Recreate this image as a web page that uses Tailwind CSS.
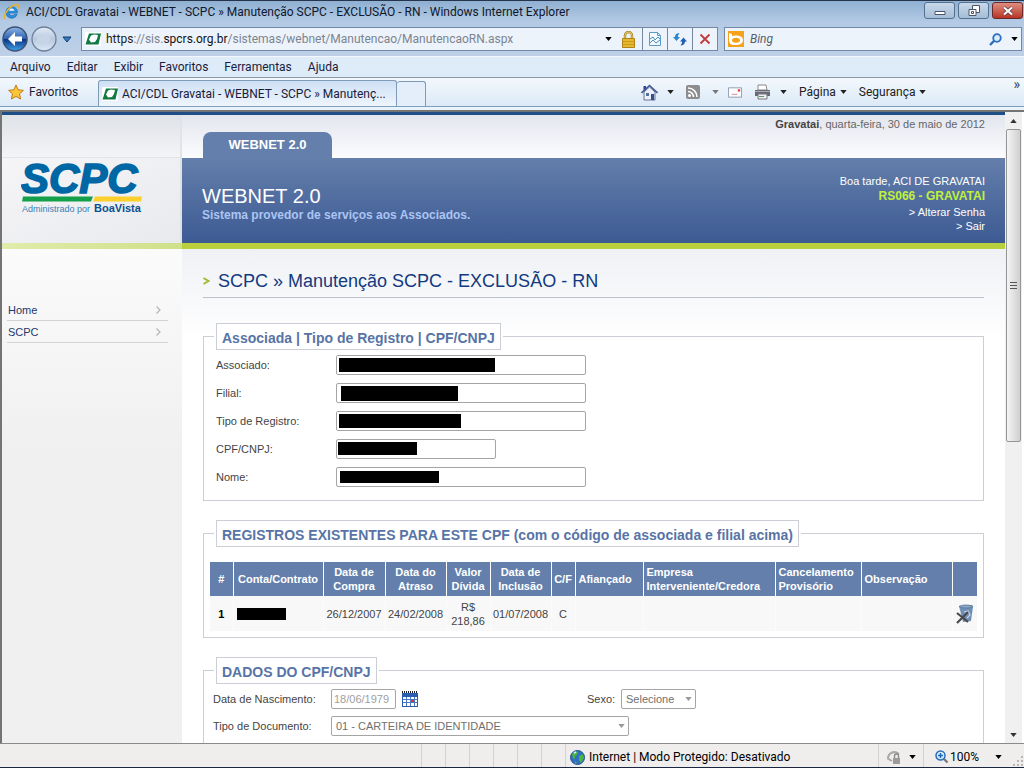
<!DOCTYPE html>
<html lang="pt-BR">
<head>
<meta charset="utf-8">
<title>ACI/CDL Gravatai - WEBNET - SCPC</title>
<script src="https://cdn.jsdelivr.net/npm/@tailwindcss/browser@4"></script>
</head>
<body class="h-screen overflow-hidden flex flex-col bg-[#b9cde6] font-[Roboto,sans-serif] text-[12px] leading-4 text-[#1b1b3a]">
<svg class="hidden">
  <defs>
    <symbol id="fav" viewBox="0 0 16 14"><path d="M0 0h16v14H0z" fill="#fff"/><path d="M4 1.500h12l-2.500 11H.500z" fill="#107a42"/><path d="M6 3.500l3-1 4 .500-1 4-2 3-4 .500-2-3z" fill="#fff"/></symbol>
    <symbol id="down" viewBox="0 0 8 5"><path d="M0 0h8L4 5z" fill="currentColor"/></symbol>
  </defs>
</svg>

<header class="shrink-0 border-t border-[#26344c]">
  <div class="h-[21px] flex items-center pl-[3px] bg-linear-to-b from-[#8fb0d2] to-[#b4cae4] whitespace-nowrap">
    <svg class="size-[17px] shrink-0" viewBox="0 0 16 16"><path d="M13.500 9.500H5.500a3 3 0 0 0 5.300 1.300h2.500A5.500 5.500 0 1 1 13.600 8z" fill="#2a8fd8" stroke="#1767ad" stroke-width=".6"/><path d="M5.600 7.200h5.200a2.700 2.700 0 0 0-5.200 0z" fill="#e9f4fc"/><path d="M2 15C-1 12 6 3 12 1.500c3-.7 3 1.500 2 3.500" fill="none" stroke="#eab331" stroke-width="1.400"/></svg>
    <h1 class="ml-[6px] text-[#10182c]">ACI/CDL Gravatai - WEBNET - SCPC » Manutenção SCPC - EXCLUSÃO - RN - Windows Internet Explorer</h1>
    <div class="ml-auto mr-[1px] flex gap-[3px] self-start pt-[1px]">
      <button aria-label="Minimizar" class="w-[31px] h-[17px] rounded-[3px] border border-[#56708f] bg-linear-to-b from-[#c8d9ea] to-[#a5bdd6] flex items-center justify-center"><svg class="w-3 h-3" viewBox="0 0 12 12"><path d="M1 6.500h10v3H1z" fill="#fff" stroke="#4a5568"/></svg></button>
      <button aria-label="Restaurar" class="w-[31px] h-[17px] rounded-[3px] border border-[#56708f] bg-linear-to-b from-[#c8d9ea] to-[#a5bdd6] flex items-center justify-center"><svg class="w-3 h-3" viewBox="0 0 12 12"><path d="M4.500.5h7v7h-7z" fill="#fff" stroke="#4a5568"/><path d="M1 4.500h7v6H1z" fill="#fff" stroke="#4a5568"/><path d="M3.500 6.500h2v2h-2z" fill="#fff" stroke="#4a5568"/></svg></button>
      <button aria-label="Fechar" class="w-[31px] h-[17px] rounded-[3px] border border-[#6b2a2a] bg-linear-to-b from-[#dd8d80] to-[#b73222] flex items-center justify-center"><svg class="w-3 h-3" viewBox="0 0 12 12"><path d="M2 2.500l8 7M10 2.500l-8 7" stroke="#5a3540" stroke-width="3.600"/><path d="M2 2.500l8 7M10 2.500l-8 7" stroke="#fff" stroke-width="2.200"/></svg></button>
    </div>
  </div>

  <div class="h-[34px] flex items-center px-[2px] bg-linear-to-b from-[#b4cae4] to-[#bdd0e8]">
    <div class="flex items-center gap-[3px] shrink-0">
      <button aria-label="Voltar"><svg class="size-[26px]" viewBox="0 0 26 26"><defs><linearGradient id="bk" x2="0" y2="1"><stop stop-color="#8fb6e6"/><stop offset=".48" stop-color="#2d62b0"/><stop offset=".52" stop-color="#0b3585"/><stop offset="1" stop-color="#3fa3ea"/></linearGradient></defs><circle cx="13" cy="13" r="12" fill="url(#bk)" stroke="#3d5273" stroke-width="1.500"/><path d="M6 13l7-7v4.500h7v5h-7V20z" fill="#fff"/></svg></button>
      <button aria-label="Avançar"><svg class="size-[26px]" viewBox="0 0 26 26"><defs><linearGradient id="fw" x2="0" y2="1"><stop stop-color="#e3ecf7"/><stop offset=".5" stop-color="#b9c9de"/><stop offset="1" stop-color="#dbe8f5"/></linearGradient></defs><circle cx="13" cy="13" r="12" fill="url(#fw)" stroke="#6d7f99" stroke-width="1.300"/><path d="M20 13l-7-7v4.500H6v5h7V20z" fill="#c6d5e8"/></svg></button>
      <button aria-label="Histórico" class="ml-[2px]"><svg class="w-[10px] h-[7px]" viewBox="0 0 10 7"><path d="M1 1h8L5 6z" fill="#2f7dc4" stroke="#163c70"/></svg></button>
    </div>
    <div class="ml-[9px] flex-1 h-6 flex items-center border border-[#7488a3] bg-[#edf3fb] pl-[3px]">
      <svg class="w-4 h-[14px] shrink-0"><use href="#fav"/></svg>
      <div class="ml-[5px] flex-1 whitespace-nowrap text-[#7c8490]"><span class="text-[#222]">https</span>://sis.<span class="text-[#111]">spcrs.org.br</span>/sistemas/webnet/Manutencao/ManutencaoRN.aspx</div>
      <svg class="w-[7px] h-1 text-black mr-[9px]" preserveAspectRatio="none"><use href="#down"/></svg>
      <svg class="w-[15px] h-[17px] mr-[6px]" viewBox="0 0 15 17"><path d="M4 8V4.500a3.500 3.500 0 0 1 7 0V8" fill="none" stroke="#a97e14" stroke-width="2.400"/><path d="M4 8V4.500a3.500 3.500 0 0 1 7 0V8" fill="none" stroke="#ecd27a"/><path d="M1.500 7.500h12v9h-12z" fill="#e8b830" stroke="#b0821a"/><path d="M2 10.500h11M2 13.500h11" stroke="#c99a1e"/></svg>
      <button aria-label="Modo de compatibilidade" class="w-[25px] h-[22px] border-l border-[#7488a3] flex items-center justify-center"><svg class="w-3 h-[14px]" viewBox="0 0 12 14"><path d="M.5.500h8l3 3v10H.500zM8.500.500v3h3" fill="#f3f9ff" stroke="#5a9cc8"/><path d="M1 7l3-2 2 3 3-3 2 2M1 11l3-3 3 3 4-3" fill="none" stroke="#4a90c0"/></svg></button>
      <button aria-label="Atualizar" class="w-[25px] h-[22px] border-l border-[#7488a3] flex items-center justify-center"><svg class="size-[14px]" viewBox="0 0 14 14"><path d="M0 5l3.500 4L7 5H5V3.500L6.500 1C4 1 2 2 2 5z" fill="#2d86cf"/><path d="M7 9.500l3.500-4 3.500 4h-2c0 2.500-2 4-4.500 4L9 11V9.500z" fill="#2360b0"/></svg></button>
      <button aria-label="Parar" class="w-[25px] h-[22px] border-l border-[#7488a3] flex items-center justify-center"><svg class="size-3" viewBox="0 0 12 12"><path d="M1.500 1.500l9 9M10.500 1.500l-9 9" stroke="#c33a3a" stroke-width="1.800"/></svg></button>
    </div>
    <div class="ml-[6px] w-[298px] h-6 flex items-center border border-[#7488a3] bg-[#edf3fb] pl-[3px] pr-[3px]">
      <svg class="size-4 shrink-0" viewBox="0 0 16 16"><path d="M0 0h16v16H0z" fill="#f5a21b"/><path d="M1 2l3 1v2c3-1 11-1 11 4s-6 5-9 5-5-2-5-5z" fill="#fff"/><ellipse cx="8" cy="9.300" rx="4" ry="2.500" fill="#f5a21b"/></svg>
      <input aria-label="Pesquisar" placeholder="Bing" class="ml-[6px] min-w-0 flex-1 bg-transparent italic placeholder:text-[#555e6b] outline-none">
      <button aria-label="Buscar"><svg class="size-[13px]" viewBox="0 0 13 13"><circle cx="8" cy="5" r="3.800" fill="#d8ecfb" stroke="#2f6fc0" stroke-width="1.800"/><path d="M5.300 7.700L1 12" stroke="#2f6fc0" stroke-width="2.400"/></svg></button>
      <svg class="ml-[9px] w-[7px] h-1 text-black" preserveAspectRatio="none"><use href="#down"/></svg>
    </div>
  </div>

  <nav class="h-[22px] flex items-center gap-4 pl-[10px] border-y border-[#f4f8fd] border-b-[#8c97a5] bg-[#deebf9] text-[12px]">
    <a href="#">Arquivo</a><a href="#">Editar</a><a href="#">Exibir</a><a href="#">Favoritos</a><a href="#">Ferramentas</a><a href="#">Ajuda</a>
  </nav>

  <div class="h-[29px] flex items-end bg-linear-to-b from-[#f3f8fd] to-[#dce9f7] whitespace-nowrap border-b border-[#7fa0bd]">
    <button class="w-[98px] h-full flex items-center pl-2"><svg class="size-4 mr-[5px]" viewBox="0 0 16 16"><path d="M8 1l2.200 4.800 5.200.600-3.900 3.500 1.100 5.100L8 12.400 3.400 15l1.100-5.100L.600 6.400l5.200-.6z" fill="#fdc63a" stroke="#c07a16"/></svg>Favoritos</button>
    <div class="w-[299px] h-[26px] border border-b-0 border-[#7f9bb8] rounded-t-[3px] bg-linear-to-b from-[#cfe0f5] to-[#eef5fc] flex items-center pl-[3px]">
      <svg class="w-4 h-[14px] shrink-0"><use href="#fav"/></svg><span class="ml-1">ACI/CDL Gravatai - WEBNET - SCPC » Manutenç...</span>
    </div>
    <button aria-label="Nova guia" class="w-[29px] h-[25px] border border-l-0 border-b-0 border-[#7f9bb8] rounded-t-[3px] bg-[#e3eefa]"></button>
    <div class="ml-auto flex items-center h-full text-[#222]">
      <svg class="size-[17px]" viewBox="0 0 17 17"><path d="M3 8v8h11V8L8.500 3z" fill="#eef1fa" stroke="#64719a"/><path d="M2.500 2h2.500v4H2.500z" fill="#2a3fb0"/><path d="M.500 9L8.500 1.500l8 7.500" fill="none" stroke="#44598f" stroke-width="1.600"/><path d="M10 10h3v6h-3z" fill="#31508c"/><path d="M5 9h3v3H5z" fill="#53709c"/></svg>
      <svg class="ml-[9px] w-[7px] h-1" preserveAspectRatio="none"><use href="#down"/></svg>
      <svg class="ml-3 size-[14px]" viewBox="0 0 14 14"><rect width="14" height="14" rx="2" fill="#8d8d8d"/><circle cx="3.500" cy="10.500" r="1.500" fill="#fff"/><path d="M2 6.500A5.500 5.500 0 0 1 7.500 12M2 3a9 9 0 0 1 9 9" fill="none" stroke="#fff" stroke-width="1.500"/></svg>
      <svg class="ml-3 w-[7px] h-1 text-[#777]" preserveAspectRatio="none"><use href="#down"/></svg>
      <svg class="ml-[9px] w-[14px] h-[11px]" viewBox="0 0 15 11"><path d="M.500.500h14v10H.500z" fill="#fbfcff" stroke="#8d99b0"/><path d="M10.500 2h2.500v2.500h-2.500z" fill="#d9413a"/><path d="M4 7.500h6" stroke="#d58a8a"/></svg>
      <svg class="ml-3 w-[17px] h-4" viewBox="0 0 17 16"><path d="M4 1h8l1 5H4z" fill="#fff" stroke="#888"/><path d="M1 6h15v6H1z" fill="#666b73"/><path d="M1 7.500h15" stroke="#aab" /><path d="M4 10h9v5H4z" fill="#eef" stroke="#777"/><path d="M5 12.500h5" stroke="#5a9a5a"/></svg>
      <svg class="ml-[9px] w-[7px] h-1" preserveAspectRatio="none"><use href="#down"/></svg>
      <button class="ml-3 flex items-center gap-1">Página<svg class="w-[7px] h-1" preserveAspectRatio="none"><use href="#down"/></svg></button>
      <button class="ml-3 flex items-center gap-1">Segurança<svg class="w-[7px] h-1" preserveAspectRatio="none"><use href="#down"/></svg></button>
      <span class="ml-[87px] mr-1 self-start text-[14px] leading-3 text-[#33466b]">»</span>
    </div>
  </div>
  <div class="h-[3px] bg-[#eaf2fb]"></div>
</header>

<div class="flex-1 min-h-0 flex border-l-2 border-t-2 border-[#747474] bg-white font-['Liberation_Sans',sans-serif] text-[11px] leading-[14px] text-[#444]">
  <div class="flex-1 min-w-0 flex flex-col overflow-hidden">
    <div class="h-[3px] shrink-0 bg-[#1f4e86]"></div>
    <div class="flex-1 min-h-0 flex">
      <aside class="w-[180px] shrink-0 flex flex-col bg-[#f0f0f0]">
        <div class="h-[43px] shrink-0 bg-linear-to-b from-[#dfe2e7] to-[#f3f4f7] border-b border-[#e2e4e9] border-r-2 border-r-[#e0e3e8]"></div>
        <div class="h-[85px] shrink-0 bg-linear-to-br from-[#f5f5f7] to-[#e9eaee] pl-[19px] border-r-2 border-[#dfe1e6]">
          <svg class="w-[124px] h-[60px]" viewBox="0 0 124 60" font-family="Liberation Sans, sans-serif">
            <text x="0" y="35" font-size="42" font-weight="bold" font-style="italic" fill="#0067a5" stroke="#0067a5" stroke-width="1.600">SCPC</text>
            <path d="M2 38.500h70l-2 5H1z" fill="#14a04a"/><path d="M74 38.500h47l-1 5H72z" fill="#fcd02c"/>
            <text x="1" y="54" font-size="9" fill="#3c7fb5">Administrado por</text>
            <text x="73" y="54" font-size="11" font-weight="bold" fill="#0a4f90">BoaVista</text>
          </svg>
        </div>
        <div class="h-[6px] shrink-0 bg-linear-to-r from-[#e0ecaa] to-[#cfe08a]"></div>
        <nav class="h-[200px] pt-[50px] pl-[5px] pr-[14px] bg-linear-to-b from-[#fbfbfb] to-[#f0f0f0] text-[#24386e]">
          <a href="#" class="flex items-center justify-between h-[22px] pl-[1px] pr-[7px] border-b border-[#d4d4d6]">Home<svg class="w-[5px] h-[8px]" viewBox="0 0 5 8"><path d="M.500.500L4 4 .500 7.500" fill="none" stroke="#b5b5b5" stroke-width="1.200"/></svg></a>
          <a href="#" class="flex items-center justify-between h-[22px] pl-[1px] pr-[7px] border-b border-[#d4d4d6]">SCPC<svg class="w-[5px] h-[8px]" viewBox="0 0 5 8"><path d="M.500.500L4 4 .500 7.500" fill="none" stroke="#b5b5b5" stroke-width="1.200"/></svg></a>
        </nav>
      </aside>

      <main class="flex-1 min-w-0 flex flex-col">
        <div class="h-[43px] shrink-0 flex justify-between pl-[21px] pr-5 bg-linear-to-b from-[#e3e6ee] to-[#fcfcfe]">
          <a href="#" class="self-end w-[129px] h-[26px] rounded-t-[8px] bg-[#647fab] text-white font-bold text-[13px] flex items-center justify-center">WEBNET 2.0</a>
          <p class="pt-[2px] text-[#666]"><b class="text-[#444]">Gravatai</b>, quarta-feira, 30 de maio de 2012</p>
        </div>
        <div class="h-[91px] shrink-0 flex justify-between pl-5 pr-5 bg-linear-to-b from-[#647fab] to-[#3d5a93] border-b-[6px] border-[#b9cf3c]">
          <div class="pt-[27px]"><h2 class="text-[20px] leading-[22px] text-white">WEBNET 2.0</h2><p class="font-bold text-[12px] leading-4 text-[#abc4f2]">Sistema provedor de serviços aos Associados.</p></div>
          <div class="pt-4 text-right text-white"><p>Boa tarde, ACI DE GRAVATAI</p><p class="font-bold text-[12px] leading-[17px] text-[#c0f03c]">RS066 - GRAVATAI</p><a class="block" href="#">&gt; Alterar Senha</a><a class="block" href="#">&gt; Sair</a></div>
        </div>
        <div class="flex-1 min-h-0 overflow-hidden pl-[21px] pr-[21px] bg-[linear-gradient(#eff1f5,#fff_92px)]">
          <h2 class="mt-[15px] h-[34px] flex items-center border-b border-[#bcc0cf] text-[18px] text-[#123a80]"><svg class="w-[7px] h-2 mr-2" viewBox="0 0 7 8"><path d="M.500 1L5.500 4 .500 7" fill="none" stroke="#9dbb2c" stroke-width="1.800"/></svg>SCPC » Manutenção SCPC - EXCLUSÃO - RN</h2>

          <fieldset class="mt-[25px] border border-[#ccced6] pb-[13px] pl-3 pr-3">
            <legend class="-ml-[2px] px-[2px]"><span class="block border border-[#ccced6] bg-white px-[5px] h-[27px] leading-[28px] text-[14px] font-bold text-[#5874a6]">Associada | Tipo de Registro | CPF/CNPJ</span></legend>
            <div class="pt-[5px] grid grid-cols-[120px_1fr] gap-y-2 items-center">
              <label for="a1">Associado:</label><div class="relative h-5"><input id="a1" readonly class="block w-[250px] h-5 rounded-[2px] border border-[#a5a5a5] bg-white"><span class="absolute left-[3px] top-[3px] w-[156px] h-[14px] bg-black"></span></div>
              <label for="a2">Filial:</label><div class="relative h-5"><input id="a2" readonly class="block w-[250px] h-5 rounded-[2px] border border-[#a5a5a5] bg-white"><span class="absolute left-[5px] top-[3px] w-[117px] h-[15px] bg-black"></span></div>
              <label for="a3">Tipo de Registro:</label><div class="relative h-5"><input id="a3" readonly class="block w-[250px] h-5 rounded-[2px] border border-[#a5a5a5] bg-white"><span class="absolute left-[3px] top-[3px] w-[122px] h-[14px] bg-black"></span></div>
              <label for="a4">CPF/CNPJ:</label><div class="relative h-5"><input id="a4" readonly class="block w-[160px] h-5 rounded-[2px] border border-[#a5a5a5] bg-white"><span class="absolute left-[2px] top-[3px] w-[79px] h-[13px] bg-black"></span></div>
              <label for="a5">Nome:</label><div class="relative h-5"><input id="a5" readonly class="block w-[250px] h-5 rounded-[2px] border border-[#a5a5a5] bg-white"><span class="absolute left-1 top-[4px] w-[99px] h-[12px] bg-black"></span></div>
            </div>
          </fieldset>

          <fieldset class="mt-[19px] border border-[#ccced6] pb-[6px] px-[6px]">
            <legend class="ml-1 px-[2px]"><span class="block border border-[#ccced6] bg-white px-[5px] h-[27px] leading-[28px] text-[14px] font-bold text-[#5874a6]">REGISTROS EXISTENTES PARA ESTE CPF (com o código de associada e filial acima)</span></legend>
            <table class="mt-[15px] w-full table-fixed border-collapse text-center">
              <colgroup><col class="w-[23px]"><col class="w-[90px]"><col class="w-[62px]"><col class="w-[61px]"><col class="w-[44px]"><col class="w-[61px]"><col class="w-[24px]"><col class="w-[68px]"><col class="w-[132px]"><col class="w-[86px]"><col class="w-[91px]"><col></colgroup>
              <thead><tr class="h-[34px] bg-[#647fab] text-white whitespace-nowrap [&>th]:border-r [&>th]:border-white [&>th:last-child]:border-r-0">
                <th>#</th><th>Conta/Contrato</th><th>Data de<br>Compra</th><th>Data do<br>Atraso</th><th>Valor<br>Dívida</th><th>Data de<br>Inclusão</th><th>C/F</th><th class="text-left pl-[3px]">Afiançado</th><th class="text-left pl-[3px]">Empresa<br>Interveniente/Credora</th><th class="text-left pl-[3px]">Cancelamento<br>Provisório</th><th class="text-left pl-[3px]">Observação</th><th></th>
              </tr></thead>
              <tbody><tr class="h-[35px] bg-[#f8f8f8] [&>td]:border-r [&>td]:border-[#fcfcfc] [&>td:last-child]:border-r-0">
                <td class="font-bold text-black">1</td><td><span class="block ml-[3px] w-[49px] h-3 bg-black"></span></td><td>26/12/2007</td><td>24/02/2008</td><td>R$<br>218,86</td><td>01/07/2008</td><td>C</td><td></td><td></td><td></td><td></td>
                <td><button aria-label="Excluir" class="block ml-[2px]"><svg class="w-[19px] h-5" viewBox="0 0 19 20"><path d="M4 2l13-1 1 2-2 14-8 1z" fill="#6f8fb4"/><path d="M4 2.500c3-2 11-2 14 0-2 2-11 2-14 0z" fill="#8aa6c4" stroke="#4f6f96" stroke-width=".7"/><path d="M9 8l4-1 2 4-3 3" fill="none" stroke="#c7d8ea" stroke-width="1.200"/><path d="M2 9l11 9M13 8L2 19" stroke="#4a4a4e" stroke-width="2.200"/></svg></button></td>
              </tr></tbody>
            </table>
          </fieldset>

          <fieldset class="mt-[19px] border border-[#ccced6] pb-5 pl-[9px] pr-3 min-h-[120px]">
            <legend class="ml-[1px] px-[2px]"><span class="block border border-[#ccced6] bg-white px-[5px] h-[27px] leading-[28px] text-[14px] font-bold text-[#5874a6]">DADOS DO CPF/CNPJ</span></legend>
            <div class="pt-[5px] flex flex-col gap-[7px]">
              <div class="flex items-center h-5"><label for="d1" class="w-[118px]">Data de Nascimento:</label><input id="d1" value="18/06/1979" disabled class="w-[65px] h-5 rounded-[2px] border border-[#a5a5a5] bg-white pl-[2px] text-[#a0a0a0]">
                <button aria-label="Calendário" class="ml-[6px]"><svg class="size-4" viewBox="0 0 16 16"><path d="M0 2h16v14H0z" fill="#2b5cb0"/><path d="M0 1h16" stroke="#222" stroke-width="2" stroke-dasharray="1 1"/><path d="M1 6h14v9H1z" fill="#fff"/><path d="M1 8.500h14M1 11.500h14M4.500 6v9M8.500 6v9M12.500 6v9" stroke="#4a78c0"/><path d="M9 9h3v2H9z" fill="#d33"/></svg></button>
                <label for="d2" class="ml-[169px] w-[34px]">Sexo:</label>
                <div class="relative"><select id="d2" disabled class="block appearance-none w-[75px] h-5 rounded-[2px] border border-[#a5a5a5] bg-white pl-1 text-[#6f6f6f]"><option>Selecione</option></select><svg class="absolute right-1 top-2 w-[7px] h-1 text-[#999]" preserveAspectRatio="none"><use href="#down"/></svg></div>
              </div>
              <div class="flex items-center h-5"><label for="d3" class="w-[118px]">Tipo de Documento:</label>
                <div class="relative"><select id="d3" disabled class="block appearance-none w-[298px] h-5 rounded-[2px] border border-[#a5a5a5] bg-white pl-1 text-[#6f6f6f]"><option>01 - CARTEIRA DE IDENTIDADE</option></select><svg class="absolute right-1 top-2 w-[7px] h-1 text-[#999]" preserveAspectRatio="none"><use href="#down"/></svg></div>
              </div>
            </div>
          </fieldset>
        </div>
      </main>
    </div>
  </div>
  <div class="w-[17px] mr-[2px] shrink-0 flex flex-col bg-[#f0f0f0]">
    <div class="h-[17px] flex items-center justify-center text-[#333]"><svg class="w-[7px] h-1 rotate-180" preserveAspectRatio="none"><use href="#down"/></svg></div>
    <div class="h-[313px] mx-[1px] rounded-[2px] border border-[#959595] bg-linear-to-r from-[#f4f4f4] to-[#cfcfcf] flex items-center justify-center"><svg class="w-[7px] h-2" viewBox="0 0 7 8"><path d="M0 .500h7M0 3.500h7M0 6.500h7" stroke="#555"/></svg></div>
    <div class="mt-auto h-[17px] flex items-center justify-center text-[#333]"><svg class="w-[7px] h-1" preserveAspectRatio="none"><use href="#down"/></svg></div>
  </div>
</div>

<footer class="h-[25px] shrink-0 flex items-center border-t border-b border-t-[#8a8a8a] border-b-[#1b2740] bg-[#f0eeed] text-black">
  <div class="flex-1 flex justify-end self-stretch"><i class="w-6 border-l border-[#d4d2d1]"></i><i class="w-6 border-l border-[#d4d2d1]"></i><i class="w-6 border-l border-[#d4d2d1]"></i><i class="w-6 border-l border-[#d4d2d1]"></i><i class="w-6 border-l border-[#d4d2d1]"></i><i class="w-6 border-l border-[#d4d2d1]"></i></div>
  <div class="w-[313px] self-stretch flex items-center gap-1 border-l border-[#d4d2d1] pt-[3px] pl-1"><svg class="size-[15px]" viewBox="0 0 15 15"><circle cx="7.500" cy="7.500" r="7" fill="#2e6fc4" stroke="#235090"/><path d="M2 4c2-3 5-3 6-2l-1 3-2 1v3L3 8zM9 6l4-2 1 4-3 5-2-3zM5 11l2 2-2 1z" fill="#4fb33f"/><path d="M4 3l2-1" stroke="#d7efff" stroke-width="1.500"/></svg>Internet | Modo Protegido: Desativado</div>
  <div class="w-[45px] self-stretch flex items-center gap-[7px] border-l border-[#d4d2d1] pt-[3px] pl-2"><svg class="size-[15px]" viewBox="0 0 15 15"><path d="M1 9C1 3 7 0 12 4" fill="none" stroke="#a8a8a8" stroke-width="2"/><path d="M0 8l5 3" stroke="#aaa" stroke-width="2"/><path d="M7.500 8V6a2 2 0 0 1 4 0v2" fill="none" stroke="#888" stroke-width="1.400"/><path d="M6 8h7v6H6z" fill="#9b9b9b"/></svg><svg class="w-[7px] h-1" preserveAspectRatio="none"><use href="#down"/></svg></div>
  <div class="w-[101px] self-stretch flex items-center border-l border-[#d4d2d1] pt-[3px] pl-[11px]"><svg class="size-[14px] mr-[1px]" viewBox="0 0 14 14"><path d="M8 8l4.500 4.500" stroke="#777" stroke-width="2.200"/><circle cx="5.500" cy="5.500" r="4.500" fill="#d8efff" stroke="#2b6cb8" stroke-width="1.500"/><path d="M3 5.500h5M5.500 3v5" stroke="#1f66b5" stroke-width="1.400"/></svg>100%<svg class="ml-4 w-[7px] h-1" preserveAspectRatio="none"><use href="#down"/></svg><svg class="ml-auto self-end size-[11px]" viewBox="0 0 11 11"><path d="M8 0h2v2H8zM4 4h2v2H4zM8 4h2v2H8zM0 8h2v2H0zM4 8h2v2H4zM8 8h2v2H8z" fill="#b9b7b5"/></svg></div>
</footer>
</body>
</html>
